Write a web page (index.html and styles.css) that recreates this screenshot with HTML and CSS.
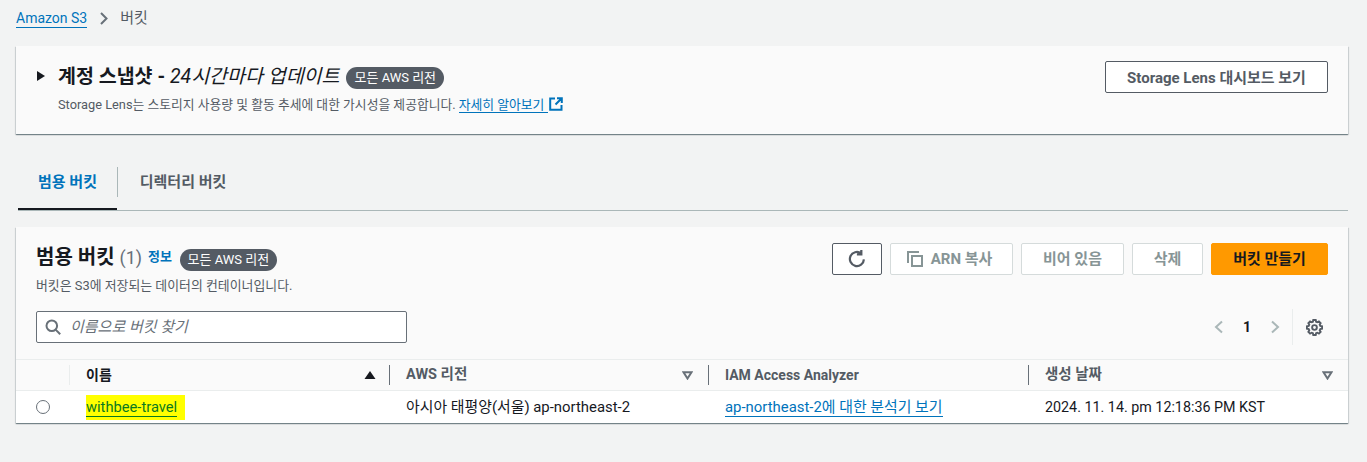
FILE: index.html
```html
<!DOCTYPE html>
<html lang="ko">
<head>
<meta charset="utf-8">
<title>Amazon S3 버킷</title>
<link rel="stylesheet" href="styles.css">
</head>
<body>
<nav class="crumbs">
  <a class="link crumb-link" href="#">Amazon S3</a>
  <svg class="crumb-sep" width="8" height="13" viewBox="0 0 8 13"><path d="M1 1l5.500 5.500L1 12" fill="none" stroke="#687078" stroke-width="2"/></svg>
  <span class="crumb-cur">버킷</span>
</nav>

<section class="panel snapshot">
  <div class="snap-main">
    <div class="snap-title">
      <svg class="caret" width="8" height="10" viewBox="0 0 8 10"><path d="M0 0 8 5 0 10z" fill="#16191f"/></svg>
      <h2 class="h-snap"><b>계정 스냅샷 -</b> <i>24시간마다 업데이트</i></h2>
      <span class="badge">모든 AWS 리전</span>
    </div>
    <p class="snap-desc">Storage Lens는 스토리지 사용량 및 활동 추세에 대한 가시성을 제공합니다. <a class="link" href="#">자세히 알아보기 </a><svg class="ext" width="14" height="14" viewBox="0 0 14 14"><path d="M6 1.500H1.200v11.300h11.300V8M8 1.200h4.800V6M12.500 1.500 6.500 7.500" fill="none" stroke="#0073bb" stroke-width="2"/></svg></p>
  </div>
  <a class="btn btn-normal btn-lens" href="#">Storage Lens 대시보드 보기</a>
</section>

<div class="tabs">
  <div class="tab tab-active">범용 버킷</div>
  <div class="tab">디렉터리 버킷</div>
</div>

<section class="panel buckets">
  <div class="b-head">
    <div class="b-left">
      <div class="b-title">
        <h2 class="h-b">범용 버킷 <span class="count">(1)</span></h2>
        <a class="info" href="#">정보</a>
        <span class="badge">모든 AWS 리전</span>
      </div>
      <p class="b-desc">버킷은 S3에 저장되는 데이터의 컨테이너입니다.</p>
    </div>
    <div class="actions">
      <button class="btn btn-normal btn-icon"><svg width="20" height="20" viewBox="0 0 18 18"><path d="M15.200 9.300A6.300 6.300 0 1 1 12.600 3.900M12.900 .8v4h-4" fill="none" stroke="#545b64" stroke-width="2"/></svg></button>
      <button class="btn btn-off btn-arn"><svg width="16" height="16" viewBox="0 0 16 16"><path d="M1 12V1h11M5 5h10v10H5z" fill="none" stroke="#879596" stroke-width="2"/></svg>ARN 복사</button>
      <button class="btn btn-off btn-empty">비어 있음</button>
      <button class="btn btn-off btn-del">삭제</button>
      <button class="btn btn-primary">버킷 만들기</button>
    </div>
  </div>
  <div class="b-tools">
    <label class="search">
      <svg width="16" height="16" viewBox="0 0 16 16"><circle cx="6.800" cy="6.800" r="5.300" fill="none" stroke="#687078" stroke-width="2"/><path d="m10.600 10.600 4.600 4.600" stroke="#687078" stroke-width="2"/></svg>
      <span class="ph">이름으로 버킷 찾기</span>
    </label>
    <div class="pager">
      <svg width="10" height="14" viewBox="0 0 10 14"><path d="M8 1.500 2 7l6 5.500" fill="none" stroke="#aab7b8" stroke-width="2"/></svg>
      <span class="page">1</span>
      <svg width="10" height="14" viewBox="0 0 10 14"><path d="M2 1.500 8 7l-6 5.500" fill="none" stroke="#aab7b8" stroke-width="2"/></svg>
      <span class="pager-sep"></span>
      <svg width="17" height="17" viewBox="-1 -1 18 18"><path d="M6.700 0h2.600l.4 1.900 1.300.6 1.700-1 1.800 1.800-1 1.700.6 1.300 1.900.4v2.600l-1.900.4-.6 1.300 1 1.700-1.800 1.800-1.700-1-1.300.6-.4 1.900H6.700l-.4-1.900-1.300-.6-1.700 1-1.800-1.800 1-1.700-.6-1.300L0 9.300V6.700l1.900-.4.6-1.300-1-1.700L3.300 1.500l1.700 1 1.300-.6z" fill="none" stroke="#545b64" stroke-width="2"/><circle cx="8" cy="8" r="2.500" fill="none" stroke="#545b64" stroke-width="2"/></svg>
    </div>
  </div>
  <div class="row row-head">
    <div class="cell cell-radio"></div>
    <div class="cell th th-name">이름<svg width="12" height="8" viewBox="0 0 12 8"><path d="M6 0l5.500 8H.5z" fill="#16191f"/></svg></div>
    <div class="cell th">AWS 리전<svg class="sort" width="11" height="9" viewBox="0 0 11 9"><path d="M1.500 1.200h8L5.500 7.500z" fill="none" stroke="#687078" stroke-width="2"/></svg></div>
    <div class="cell th th-iam">IAM Access Analyzer</div>
    <div class="cell th">생성 날짜<svg class="sort" width="11" height="9" viewBox="0 0 11 9"><path d="M1.500 1.200h8L5.500 7.500z" fill="none" stroke="#687078" stroke-width="2"/></svg></div>
  </div>
  <div class="row row-body">
    <div class="cell cell-radio"><span class="radio"></span></div>
    <div class="cell cell-name"><span class="hl"><a class="link hl-link" href="#">withbee-travel</a></span></div>
    <div class="cell">아시아 태평양(서울) ap-northeast-2</div>
    <div class="cell"><a class="link" href="#">ap-northeast-2에 대한 분석기 보기</a></div>
    <div class="cell cell-date">2024. 11. 14. pm 12:18:36 PM KST</div>
  </div>
</section>
</body>
</html>
```
FILE: styles.css
```css
* { box-sizing: border-box; }
html, body { margin: 0; height: 462px; overflow: hidden; }
body {
  background: #f2f3f3;
  color: #16191f;
  font: 14px/18px Roboto, "Noto Sans CJK KR", sans-serif;
  padding: 8px 19px 0 16px;
}
h2, p { margin: 0; font-size: inherit; font-weight: inherit; }
.link { color: #0073bb; text-decoration: none; border-bottom: 1px solid #0073bb; }

.crumbs { display: flex; align-items: center; height: 20px; gap: 12.500px; font-size: 15px; }
.crumb-link { font-size: 14px; }
.crumb-cur { color: #545b64; }

.panel { background: #fafafa; box-shadow: 0 1px 1px 0 rgba(0,28,36,.4), 1px 1px 1px 0 rgba(0,28,36,.1), -1px 1px 1px 0 rgba(0,28,36,.1); }

.snapshot { margin-top: 18px; height: 88px; padding: 18px 20px 0 21px; display: flex; justify-content: space-between; align-items: flex-start; }
.snap-title { display: flex; align-items: center; height: 24px; }
.caret { margin-right: 13px; }
.h-snap { font-size: 19.500px; line-height: 24px; font-weight: 400; padding-top: 1px; }
.h-snap b { font-weight: 700; }
.badge { display: inline-block; background: #545b64; color: #fff; border-radius: 11px; font-size: 13px; line-height: 22px; height: 22px; padding: 0 8px; margin: 3px 0 0 7px; white-space: nowrap; }
.snap-desc { font-size: 12.800px; line-height: 16px; color: #545b64; margin: 9px 0 0 21px; }
.ext { vertical-align: -2px; margin-left: 1px; }

.btn { display: flex; align-items: center; justify-content: center; height: 32px; border-radius: 2px; font: 700 15px/18px Roboto, "Noto Sans CJK KR", sans-serif; text-decoration: none; background: #fff; padding: 0; }
.btn-normal { border: 1px solid #545b64; color: #545b64; }
.btn-off { border: 1px solid #d5dbdb; color: #879596; }
.btn-primary { border: 1px solid #ff9900; background: #ff9900; color: #16191f; width: 117px; }
.btn-lens { width: 223px; margin-top: -3px; padding-top: 1px; }
.btn-icon { width: 50px; }
.btn-arn { width: 123px; gap: 8px; padding-right: 4px; }
.btn-empty { width: 103px; }
.btn-del { width: 71px; }

.tabs { display: flex; margin: 26px 0 0 2px; height: 51px; border-bottom: 1px solid #aab7b8; }
.tab { width: 99px; padding-top: 12px; font-size: 15px; font-weight: 700; color: #545b64; text-align: center; position: relative; height: 50px; line-height: 20px; }
.tab + .tab { width: 132px; }
.tab + .tab::before { content: ""; position: absolute; left: 0; top: 7px; height: 30px; width: 1px; background: #aab7b8; }
.tab-active { color: #0073bb; border-bottom: 2px solid #16191f; }

.buckets { margin-top: 16px; height: 196px; }
.b-head { display: flex; justify-content: space-between; padding: 16px 20px 0 20px; height: 84px; }
.b-title { display: flex; align-items: center; height: 28px; }
.h-b { font-size: 20px; font-weight: 700; line-height: 28px; }
.count { font-weight: 400; color: #687078; font-size: 18px; }
.info { color: #0073bb; font-size: 13px; font-weight: 700; margin-left: 6px; text-decoration: none; }
.b-title .badge { margin-left: 7.500px; margin-top: 6px; }
.b-desc { font-size: 12.900px; line-height: 16px; color: #545b64; margin-top: 7px; }
.actions { display: flex; gap: 8px; }

.b-tools { display: flex; justify-content: space-between; align-items: center; padding: 0 20px 0 20px; height: 32px; }
.search { width: 371px; height: 32px; background: #fff; border: 1px solid #687078; border-radius: 2px; display: flex; align-items: center; gap: 9px; padding-left: 8px; }
.ph { font-style: italic; color: #687078; font-size: 15px; }
.pager { display: flex; align-items: center; margin-right: 5px; }
.page { font-weight: 700; width: 46px; text-align: center; font-size: 14px; }
.pager-sep { width: 1px; height: 36px; background: #eaeded; margin: 0 13px 0 12px; }

.row { display: grid; grid-template-columns: 53px 320px 319px 320px 320px; }
.row-head { margin-top: 16px; height: 32px; background: #fafafa; border-top: 1px solid #eaeded; border-bottom: 1px solid #eaeded; }
.row-body { height: 32px; background: #fff; align-items: center; }
.cell { padding-left: 17px; color: #16191f; font-size: 14.900px; white-space: nowrap; }
.cell-name { font-size: 14.700px; }
.cell-date { font-size: 14.300px; }
.th { position: relative; display: flex; align-items: center; justify-content: space-between; padding: 0 15px 0 17px; font-size: 14.500px; font-weight: 700; color: #545b64; }
.th-iam { font-size: 14px; }
.th::before { content: ""; position: absolute; left: 0; top: 5px; height: 20px; width: 1px; background: #687078; }
.th-name { color: #16191f; padding-right: 13px; font-size: 14px; }
.th-name::before { background: #eaeded; }
.cell-radio { padding: 0 0 0 20px; display: flex; align-items: center; }
.radio { width: 14px; height: 14px; border: 1.500px solid #687078; border-radius: 50%; background: #fff; }
.hl { display: inline-block; background: #ffff00; padding: 3px 8px 4px 0; }
.hl-link { color: #0a7a20; border-bottom-color: #0a7a20; }
```
